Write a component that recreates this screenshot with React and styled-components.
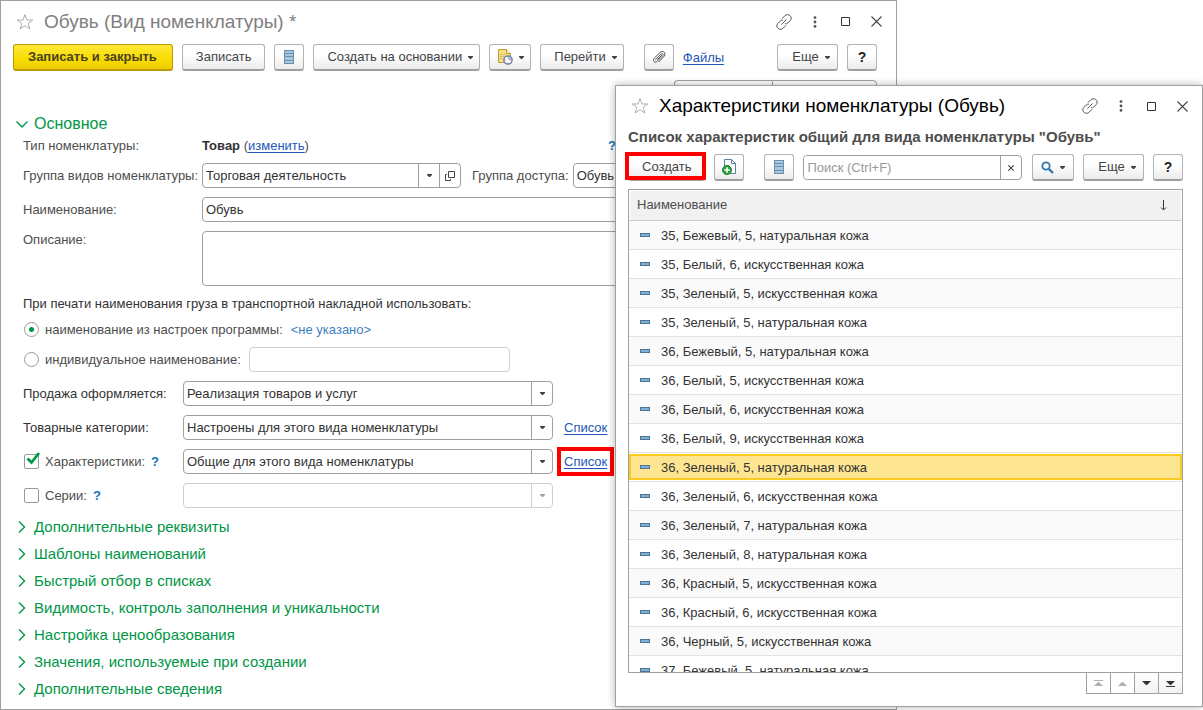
import React, { useState } from 'react'
import styled, { createGlobalStyle, css } from 'styled-components'

const GlobalStyle = createGlobalStyle`
*{
    box-sizing: border-box;
}
body{
    margin: 0;
    background: #fff;
    color: #4d4d4d;
    font-family: "Liberation Sans", Arial, sans-serif;
    font-size: 13px;
    line-height: 18px;
}
button, input, select, textarea{
    font: inherit;
    color: inherit;
    margin: 0;
}
`

const Desktop = styled.div`
position: relative;
display: flex;
min-height: 100vh;
overflow: hidden;
`

const MainWindow = styled.main`
flex: 1;
min-width: 0;
margin-right: 306px;
border: 1px solid #a0a0a0;
padding: 0 19px 0 12px;
`

const Dialog = styled.section`
position: absolute;
top: 85px;
right: 0;
bottom: 3px;
left: 615px;
display: flex;
flex-direction: column;
padding: 0 19px 12px 12px;
background: #fff;
border: 1px solid #a0a0a0;
box-shadow: 0 0 8px rgba(0, 0, 0, 0.3);
`

const TitleBar = styled.header`
display: flex;
align-items: center;
height: ${p => p.$compact ? '40px' : '43px'};
padding-bottom: ${p => p.$compact ? '0' : '2px'};
`

const Title = styled.h1`
flex: 1;
margin: 0 0 0 7px;
font-size: 19px;
line-height: 24px;
font-weight: normal;
white-space: nowrap;
color: ${p => p.$active ? '#000' : '#808080'};
`

const IconButton = styled.button`
display: grid;
place-items: center;
width: ${p => p.$wide ? '31px' : '24px'};
height: 22px;
padding: 0;
border: 0;
background: none;
cursor: pointer;
`

const WindowTools = styled.div`
display: flex;
align-items: center;
margin-right: -15px;
`

const Toolbar = styled.div`
display: flex;
align-items: center;
gap: 9px;
height: 27px;
`

const Button = styled.button`
position: relative;
display: flex;
align-items: center;
justify-content: center;
flex: none;
gap: 6px;
height: 27px;
padding: 0 13px;
border: 1px solid #b3b3b3;
border-bottom: 2px solid #9f9f9f;
border-radius: 3px;
background: linear-gradient(#fff 40%, #ebebeb);
color: #444;
white-space: nowrap;
cursor: pointer;
${p => p.$menu && css`
    min-width: 61px;
    padding: 0 6px 0 13px;
`}
${p => p.$primary && css`
    padding: 0 15px 0 14px;
    border-color: #b89b00;
    background: linear-gradient(#ffe83a, #f8dc00 60%, #edcd00);
    color: #4a4320;
    font-weight: bold;
`}
${p => p.$square && css`
    width: 30px;
    padding: 0;
`}
${p => p.$iconMenu && css`
    width: 42px;
    padding: 0;
`}
${p => p.$help && css`
    color: #222;
    font-size: 14px;
    font-weight: bold;
`}
${p => p.$marked && css`
    &::after{
        content: '';
        position: absolute;
        inset: -3px -2px -1px -4px;
        border: 4px solid #f00;
    }
`}
`

const Gap = styled.span`
width: ${p => p.$grow ? 'auto' : '2px'};
flex: ${p => p.$grow ? '1' : 'none'};
`

const Link = styled.a`
color: #2457b8;
text-decoration: underline;
text-underline-offset: 2px;
white-space: nowrap;
${p => p.$marked && css`
    outline: 4px solid #f00;
    outline-offset: 3px;
`}
`

const SearchStub = styled.div`
display: flex;
justify-content: flex-end;
margin: 9px 0 3px;
`

const StubButton = styled.button`
width: ${p => p.$last ? '105px' : '98px'};
height: 27px;
border: 1px solid #a0a0a0;
border-right-width: ${p => p.$last ? '1px' : '0'};
border-radius: ${p => p.$last ? '0 4px 4px 0' : '4px 0 0 4px'};
background: #fff;
`

const Section = styled.button`
display: flex;
align-items: center;
gap: 6px;
height: 27px;
padding: 0 0 0 3px;
border: 0;
background: none;
color: #009646;
font-size: ${p => p.$open ? '16px' : '15px'};
white-space: nowrap;
cursor: pointer;
`

const Form = styled.form`
padding-left: 10px;
`

const Row = styled.div`
display: flex;
align-items: ${p => p.$top ? 'flex-start' : 'center'};
min-height: 25px;
margin-bottom: ${p => p.$tight ? '5px' : '9px'};
${p => p.$text && css`
    min-height: 18px;
    margin-bottom: ${p.$tight ? '4px' : '8px'};
`}
`

const Label = styled.label`
flex: none;
width: ${p => p.$wide ? '179px' : p.$auto ? 'auto' : '160px'};
color: ${p => p.$dark ? '#333' : '#4d4d4d'};
white-space: nowrap;
`

const TypeValue = styled.div`
flex: 0 0 406px;
b{
    color: #333;
}
`

const Hint = styled.button`
padding: 0;
border: 0;
background: none;
color: #0e75bd;
font-weight: bold;
cursor: help;
`

const Note = styled.p`
margin: 0;
color: #333;
`

const field = css`
border: 1px solid ${p => p.$off ? '#d0d0d0' : '#a0a0a0'};
border-radius: 4px;
background: #fff;
color: #333;
`

const Input = styled.input`
${field}
flex: ${p => p.$short ? '0 0 261px' : '1'};
min-width: 0;
height: 25px;
padding: 0 3px;
`

const TextArea = styled.textarea`
${field}
display: block;
flex: 1;
height: 55px;
padding: 2px 3px;
resize: none;
`

const ComboBox = styled.div`
${field}
display: flex;
flex: ${p => p.$width ? `0 0 ${p.$width}` : '1'};
min-width: 0;
height: 25px;
select{
    flex: 1;
    min-width: 0;
    padding: 0 3px;
    border: 0;
    border-radius: 4px;
    background: none;
    appearance: none;
    opacity: 1;
}
`

const Cell = styled.button`
display: grid;
place-items: center;
width: 21px;
padding: 0;
border: 0;
border-left: 1px solid ${p => p.$off ? '#d0d0d0' : '#a0a0a0'};
background: none;
color: ${p => p.$off ? '#a0a0a0' : '#444'};
`

const Tick = styled.label`
display: flex;
align-items: center;
gap: 6px;
white-space: nowrap;
`

const TickInput = styled.input`
appearance: none;
display: grid;
place-items: center;
width: 15px;
height: 15px;
border: 1px solid #999;
background: #fff;
border-radius: ${p => p.type === 'radio' ? '50%' : '2px'};
&[type='radio']:checked::before{
    content: '';
    width: 5px;
    height: 5px;
    border-radius: 50%;
    background: #009646;
}
`

const TickBox = styled.span`
position: relative;
display: flex;
margin-left: 1px;
svg{
    position: absolute;
    left: 2px;
    top: -2px;
    pointer-events: none;
}
`

const TickCell = styled.div`
display: flex;
align-items: center;
gap: 6px;
flex: 0 0 160px;
`

const Unset = styled.span`
margin-left: 8px;
color: #3f7fc0;
`

const Aside = styled.span`
margin-left: ${p => p.$near ? '8px' : '11px'};
`

const Sections = styled.nav`
display: flex;
flex-direction: column;
align-items: flex-start;
margin-top: -4px;
`

const Subtitle = styled.h2`
margin: 1px 0 7px;
font-size: 15px;
line-height: 20px;
white-space: nowrap;
overflow: hidden;
`

const SearchBox = styled.div`
${field}
display: flex;
flex: 1;
min-width: 0;
height: 25px;
margin-right: 1px;
input{
    flex: 1;
    min-width: 0;
    padding: 0 3px;
    border: 0;
    border-radius: 4px;
    outline: 0;
}
input::placeholder{
    color: #999;
}
`

const ListFrame = styled.div`
flex: 1;
min-height: 0;
margin-top: 8px;
overflow: hidden;
border: 1px solid #a0a0a0;
`

const Table = styled.table`
width: 100%;
border-spacing: 0;
th, td{
    padding: 0;
    text-align: left;
    font-weight: normal;
}
`

const HeadCell = styled.div`
display: flex;
align-items: center;
justify-content: space-between;
height: 31px;
padding: 0 14px 1px 7px;
border: 1px solid #fff;
border-bottom: 1px solid #ccc;
background: #f1f1f1;
color: #4d4d4d;
`

const ItemRow = styled.tr`
color: #333;
background: #fff;
&:nth-child(odd){
    background: ${p => p.$selected ? '#fff' : '#fafafa'};
}
td{
    height: 29px;
    border-bottom: 1px solid #e2e2e2;
}
`

const ItemCell = styled.div`
display: flex;
align-items: center;
gap: 11px;
height: 26px;
padding: 2px 9px 0;
border: 2px solid ${p => p.$selected ? '#f9cb20' : 'transparent'};
background: ${p => p.$selected ? '#fee591' : 'none'};
white-space: nowrap;
`

const Dash = styled.i`
width: 10px;
height: 4px;
margin-bottom: 3px;
border: 1px solid #4d7390;
background: #7fb1d4;
`

const Pager = styled.div`
display: flex;
align-self: flex-end;
margin-top: -1px;
`

const PageButton = styled.button`
display: grid;
place-items: center;
width: 25px;
height: 22px;
padding: 0;
border: 1px solid #a0a0a0;
background: linear-gradient(#fff, #f2f2f2);
color: #333;
&:disabled{
    color: #b0b0b0;
    background: #fff;
}
& + &{
    margin-left: -1px;
}
`

const Star = () => (
    <svg width="18" height="18" viewBox="0 0 18 18" fill="none" stroke="#a9b0b5">
        <path d="M9 1.5 L11 7 H16.8 L12.2 10.5 L13.9 16 L9 12.7 L4.1 16 L5.8 10.5 L1.2 7 H7 Z" />
    </svg>
)

const Chain = () => (
    <svg width="16" height="16" viewBox="0 0 16 16" fill="none" stroke="#555" strokeLinecap="round">
        <path d="M6.2 4.4 L8.8 1.8 C10.2 .4 12.3 .3 13.9 1.6 C15.5 3 15.6 5 14.3 6.4 L11.8 8.9 C11 9.7 10.2 9.9 9.3 9.8" />
        <path d="M9.8 11.6 L7.2 14.2 C5.8 15.6 3.7 15.7 2.1 14.4 C.5 13 .4 11 1.7 9.6 L4.2 7.1 C5 6.3 5.8 6.1 6.7 6.2" />
        <path d="M5.7 10.3 L10.3 5.7" />
    </svg>
)

const Dots = () => (
    <svg width="4" height="12" viewBox="0 0 4 12" fill="#555">
        <circle cx="2" cy="1.6" r="1.4" />
        <circle cx="2" cy="6" r="1.4" />
        <circle cx="2" cy="10.4" r="1.4" />
    </svg>
)

const Square = () => (
    <svg width="9" height="9" viewBox="0 0 9 9" fill="none" stroke="#333">
        <path d="M.5 .5 H8.5 V8.5 H.5 Z" />
    </svg>
)

const Cross = ({ size = 11 }) => (
    <svg width={size} height={size} viewBox="0 0 11 11" stroke="#444" strokeWidth={size < 8 ? 2 : 1.1}>
        <path d="M.5 .5 L10.5 10.5 M10.5 .5 L.5 10.5" />
    </svg>
)

const Caret = () => (
    <svg width="5" height="3" viewBox="0 0 5 3" fill="currentColor">
        <path d="M0 0 H5 V1 L3 3 H2 L0 1 Z" />
    </svg>
)

const Lines = () => (
    <svg width="10" height="14" viewBox="0 0 10 14">
        <path fill="#a9c8de" d="M0 0 H10 V14 H0 Z" />
        <path stroke="#6a8fad" d="M0 .5 H10 M0 3.5 H10 M0 6.5 H10 M0 10.5 H10 M0 13.5 H10 M.5 0 V14 M9.5 0 V14" />
    </svg>
)

const DocClock = () => (
    <svg width="16" height="16" viewBox="0 0 16 16">
        <path fill="#f6de86" stroke="#c29b33" d="M1.5 .5 H9.5 L13.5 4.5 V13.5 H1.5 Z" />
        <path fill="#fff3c2" stroke="#c29b33" d="M9.5 .5 V4.5 H13.5" />
        <path stroke="#d2ae4c" strokeDasharray="2 1" d="M3 5.5 H8 M3 7.5 H7 M3 9.5 H6" />
        <circle cx="11" cy="11" r="4.2" fill="#fff" stroke="#4f82b4" strokeWidth="1.2" />
        <path fill="#a9bfe6" d="M11 11 V7.8 A3.2 3.2 0 0 1 14.2 11 Z" />
        <path stroke="#e02020" d="M11 7.3 V8.5 M11 13.5 V14.7 M7.3 11 H8.5 M13.5 11 H14.7" />
    </svg>
)

const Clip = () => (
    <svg width="14" height="14" viewBox="0 0 14 14" fill="none" stroke="#555" strokeLinecap="round">
        <path d="M3.6 9.5 L8.9 4.2 C10.6 2.8 12 4.4 10.7 5.8 L5.2 11.3 C2.8 13.4 .2 10.8 2.2 8.3 L8 2.5 C11 -.3 14.6 3 12.2 6.2 L6.8 11.8" />
        <path d="M5.4 9.5 L9.7 5.2" />
    </svg>
)

const DocPlus = () => (
    <svg width="14" height="16" viewBox="0 0 14 16">
        <path fill="#fff" stroke="#5d7f98" d="M2.5 .5 H9.5 L13.5 4.5 V14.5 H2.5 Z M9.5 .5 V4.5 H13.5" />
        <circle cx="5" cy="11" r="4.5" fill="#2ba23a" stroke="#15832a" />
        <path stroke="#fff" strokeWidth="1.6" d="M5 8.2 V13.8 M2.2 11 H7.8" />
    </svg>
)

const Magnifier = () => (
    <svg width="13" height="13" viewBox="0 0 13 13" fill="none" stroke="#3478ae">
        <circle cx="5" cy="5" r="3.7" strokeWidth="1.8" />
        <path strokeWidth="2.4" d="M7.8 7.8 L12 12" />
    </svg>
)

const OpenIcon = () => (
    <svg width="10" height="10" viewBox="0 0 10 10" fill="none" stroke="#444">
        <path d="M3.5 .5 H9.5 V6.5 H3.5 Z" />
        <path d="M2 3.5 H.5 V9.5 H5.5 V8" />
    </svg>
)

const Check = () => (
    <svg width="15" height="14" viewBox="0 0 15 14" fill="none" stroke="#009646" strokeWidth="2.8">
        <path d="M1.5 6.5 L5.5 10.5 L13 1" />
    </svg>
)

const Chevron = ({ open }) => (
    <svg width="12" height="12" viewBox="0 0 12 12" fill="none" stroke="#009646" strokeWidth="1.4">
        <path d={open ? 'M.5 3.5 L6 9 L11.5 3.5' : 'M3 .5 L8.5 6 L3 11.5'} />
    </svg>
)

const SortArrow = () => (
    <svg width="7" height="11" viewBox="0 0 7 11" fill="none" stroke="#333">
        <path d="M3.5 0 V9.5 M1 7.5 L3.5 10 L6 7.5" />
    </svg>
)

const PageIcon = ({ up, bar }) => (
    <svg width="9" height="7" viewBox="0 0 9 7" fill="currentColor">
        <path d={up ? 'M0 6 L4 2 H5 L9 6 Z' : 'M0 1 H9 L5 5 H4 Z'} />
        {bar && <path d={up ? 'M0 0 H9 V1 H0 Z' : 'M0 6 H9 V7 H0 Z'} />}
    </svg>
)

const items = [
    '35, Бежевый, 5, натуральная кожа',
    '35, Белый, 6, искусственная кожа',
    '35, Зеленый, 5, искусственная кожа',
    '35, Зеленый, 5, натуральная кожа',
    '36, Бежевый, 5, натуральная кожа',
    '36, Белый, 5, искусственная кожа',
    '36, Белый, 6, искусственная кожа',
    '36, Белый, 9, искусственная кожа',
    '36, Зеленый, 5, натуральная кожа',
    '36, Зеленый, 6, искусственная кожа',
    '36, Зеленый, 7, натуральная кожа',
    '36, Зеленый, 8, натуральная кожа',
    '36, Красный, 5, искусственная кожа',
    '36, Красный, 6, искусственная кожа',
    '36, Черный, 5, искусственная кожа',
    '37, Бежевый, 5, натуральная кожа',
]

const sections = [
    'Дополнительные реквизиты',
    'Шаблоны наименований',
    'Быстрый отбор в списках',
    'Видимость, контроль заполнения и уникальности',
    'Настройка ценообразования',
    'Значения, используемые при создании',
    'Дополнительные сведения',
]

function WindowHeader({ title, active }) {
    return (
        <TitleBar $compact={active}>
            <IconButton aria-label="В избранное"><Star/></IconButton>
            <Title $active={active}>{title}</Title>
            <WindowTools>
                <IconButton $wide aria-label="Ссылка"><Chain/></IconButton>
                <IconButton $wide aria-label="Меню"><Dots/></IconButton>
                <IconButton $wide aria-label="Развернуть"><Square/></IconButton>
                <IconButton $wide aria-label="Закрыть"><Cross/></IconButton>
            </WindowTools>
        </TitleBar>
    )
}

function Combo({ id, value, width, off, openable, label }) {
    return (
        <ComboBox $width={width} $off={off}>
            <select id={id} disabled={off} aria-label={label}>
                <option>{value}</option>
            </select>
            <Cell type="button" $off={off} aria-label="Выбрать"><Caret/></Cell>
            {openable && <Cell type="button" aria-label="Открыть"><OpenIcon/></Cell>}
        </ComboBox>
    )
}

function KindForm() {
    const [naming, setNaming] = useState('settings')
    const [traits, setTraits] = useState(true)
    const [series, setSeries] = useState(false)
    return (
        <Form>
            <Row $text>
                <Label as="span" $wide>Тип номенклатуры:</Label>
                <TypeValue><b>Товар</b> (<Link href="#type">изменить</Link>)</TypeValue>
                <Hint type="button">?</Hint>
            </Row>
            <Row>
                <Label $wide htmlFor="group">Группа видов номенклатуры:</Label>
                <Combo id="group" value="Торговая деятельность" width="259px" openable/>
                <Aside/>
                <Label $auto htmlFor="access">Группа доступа:</Label>
                <Gap/><Gap/>
                <Combo id="access" value="Обувь"/>
            </Row>
            <Row>
                <Label $wide htmlFor="name">Наименование:</Label>
                <Input id="name" defaultValue="Обувь"/>
            </Row>
            <Row $top>
                <Label $wide htmlFor="about">Описание:</Label>
                <TextArea id="about"/>
            </Row>
            <Row $text $tight>
                <Note>При печати наименования груза в транспортной накладной использовать:</Note>
            </Row>
            <Row $tight>
                <Tick>
                    <TickBox>
                        <TickInput type="radio" name="naming" checked={naming === 'settings'} onChange={() => setNaming('settings')}/>
                    </TickBox>
                    наименование из настроек программы:
                </Tick>
                <Unset>&lt;не указано&gt;</Unset>
            </Row>
            <Row>
                <Tick>
                    <TickBox>
                        <TickInput type="radio" name="naming" checked={naming === 'own'} onChange={() => setNaming('own')}/>
                    </TickBox>
                    индивидуальное наименование:
                </Tick>
                <Aside $near/>
                <Input $short $off disabled aria-label="Индивидуальное наименование"/>
            </Row>
            <Row>
                <Label $dark htmlFor="sale">Продажа оформляется:</Label>
                <Combo id="sale" value="Реализация товаров и услуг" width="370px"/>
            </Row>
            <Row>
                <Label $dark htmlFor="category">Товарные категории:</Label>
                <Combo id="category" value="Настроены для этого вида номенклатуры" width="370px"/>
                <Aside><Link href="#categories">Список</Link></Aside>
            </Row>
            <Row>
                <TickCell>
                    <Tick>
                        <TickBox>
                            <TickInput type="checkbox" checked={traits} onChange={() => setTraits(!traits)}/>
                            {traits && <Check/>}
                        </TickBox>
                        Характеристики:
                    </Tick>
                    <Hint type="button">?</Hint>
                </TickCell>
                <Combo label="Характеристики" value="Общие для этого вида номенклатуры" width="370px"/>
                <Aside><Link $marked href="#traits">Список</Link></Aside>
            </Row>
            <Row>
                <TickCell>
                    <Tick>
                        <TickBox>
                            <TickInput type="checkbox" checked={series} onChange={() => setSeries(!series)}/>
                            {series && <Check/>}
                        </TickBox>
                        Серии:
                    </Tick>
                    <Hint type="button">?</Hint>
                </TickCell>
                <Combo label="Серии" value="" width="370px" off/>
            </Row>
        </Form>
    )
}

function TraitsDialog() {
    const [current, setCurrent] = useState(8)
    return (
        <Dialog>
            <WindowHeader active title="Характеристики номенклатуры (Обувь)"/>
            <Subtitle>Список характеристик общий для вида номенклатуры "Обувь"</Subtitle>
            <Toolbar>
                <Button $marked>Создать</Button>
                <Button $square aria-label="Создать копированием"><DocPlus/></Button>
                <Gap/>
                <Button $square aria-label="Список"><Lines/></Button>
                <SearchBox>
                    <input placeholder="Поиск (Ctrl+F)" aria-label="Поиск"/>
                    <Cell aria-label="Очистить"><Cross size={6}/></Cell>
                </SearchBox>
                <Button $iconMenu aria-label="Найти"><Magnifier/><Caret/></Button>
                <Button $menu>Еще<Caret/></Button>
                <Button $square $help>?</Button>
            </Toolbar>
            <ListFrame>
                <Table>
                    <thead>
                        <tr>
                            <th><HeadCell>Наименование<SortArrow/></HeadCell></th>
                        </tr>
                    </thead>
                    <tbody>
                        {items.map((item, i) => (
                            <ItemRow key={item} $selected={i === current} onClick={() => setCurrent(i)}>
                                <td><ItemCell $selected={i === current}><Dash/>{item}</ItemCell></td>
                            </ItemRow>
                        ))}
                    </tbody>
                </Table>
            </ListFrame>
            <Pager>
                <PageButton disabled aria-label="В начало"><PageIcon up bar/></PageButton>
                <PageButton disabled aria-label="Назад"><PageIcon up/></PageButton>
                <PageButton aria-label="Вперед"><PageIcon/></PageButton>
                <PageButton aria-label="В конец"><PageIcon bar/></PageButton>
            </Pager>
        </Dialog>
    )
}

function App() {
    return (
        <Desktop>
            <GlobalStyle/>
            <MainWindow>
                <WindowHeader title="Обувь (Вид номенклатуры) *"/>
                <Toolbar>
                    <Button $primary>Записать и закрыть</Button>
                    <Button>Записать</Button>
                    <Button $square aria-label="Список"><Lines/></Button>
                    <Button $menu>Создать на основании<Caret/></Button>
                    <Button $iconMenu aria-label="Напоминание"><DocClock/><Caret/></Button>
                    <Button $menu>Перейти<Caret/></Button>
                    <Gap/>
                    <Button $square aria-label="Прикрепить"><Clip/></Button>
                    <Link href="#files">Файлы</Link>
                    <Gap $grow/>
                    <Button $menu>Еще<Caret/></Button>
                    <Button $square $help>?</Button>
                </Toolbar>
                <SearchStub>
                    <StubButton aria-label="Вид"/>
                    <StubButton $last aria-label="Настройка"/>
                </SearchStub>
                <Section $open><Chevron open/>Основное</Section>
                <KindForm/>
                <Sections>
                    {sections.map(name => (
                        <Section key={name}><Chevron/>{name}</Section>
                    ))}
                </Sections>
            </MainWindow>
            <TraitsDialog/>
        </Desktop>
    )
}

export default App
